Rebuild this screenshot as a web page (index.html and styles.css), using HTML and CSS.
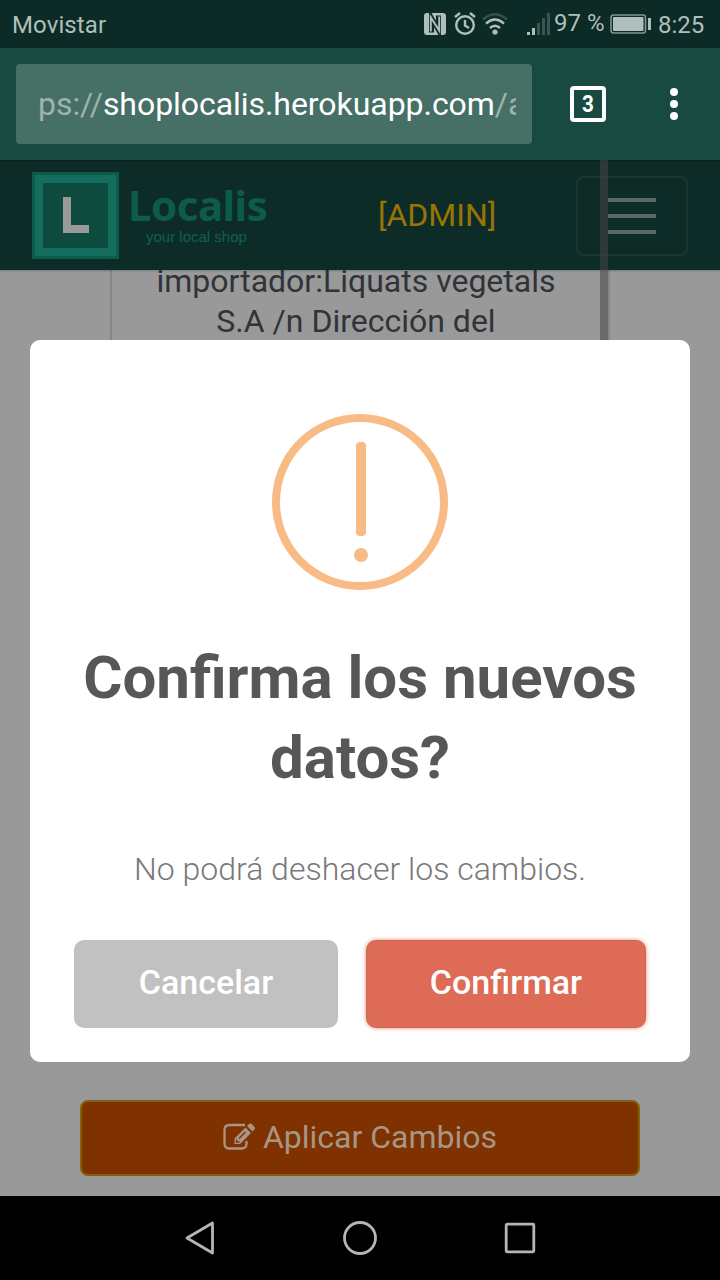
FILE: index.html
```html
<!DOCTYPE html>
<html lang="es">
<head>
<meta charset="utf-8">
<title>Localis</title>
<link rel="stylesheet" href="styles.css">
</head>
<body>
<div class="phone">
  <header class="status">
    <span class="carrier">Movistar</span>
    <div class="status-icons">
      <svg class="nfc" width="22" height="22" viewBox="0 0 22 22"><rect width="22" height="22" rx="3" fill="#afbfbb"/><path d="M7.500 19.500V5L14.500 17V2.500" fill="none" stroke="#0d2b26" stroke-width="5"/><path d="M6.800 18.500V4.500L15.200 17.500V3.500" fill="none" stroke="#afbfbb" stroke-width="2"/></svg>
      <svg class="alarm" width="22" height="24" viewBox="0 0 22 24" fill="none" stroke="#afbfbb" stroke-width="2.400"><circle cx="11" cy="13" r="8.800"/><path d="M11 8v5.500l4 2.500M1 5l5-4M21 5l-5-4"/></svg>
      <svg class="wifi" width="26" height="24" viewBox="0 0 26 24" fill="none" stroke-width="2.400"><path d="M1 7.500Q13-3 25 7.500" stroke="#37514c"/><path d="M4 11.500Q13 3.500 22 11.500M8 16Q13 11.500 18 16" stroke="#afbfbb"/><circle cx="13" cy="20" r="2.600" fill="#afbfbb"/></svg>
      <svg class="signal" width="23" height="22" viewBox="0 0 23 22"><path fill="#afbfbb" d="M0 19h3v3H0zM5 15h3v7H5z"/><path fill="#3c5450" d="M10 10h3v12h-3zM15 5h3v17h-3zM20 0h3v22h-3z"/></svg>
      <span class="percent">97 %</span>
      <svg class="battery" width="41" height="20" viewBox="0 0 41 20"><rect x="1" y="1" width="34.500" height="18" rx="2.500" fill="none" stroke="#81938f" stroke-width="1.600"/><rect x="3" y="3" width="30.500" height="14" rx="1" fill="#afbfbb"/><path d="M38 4h3v12h-3z" fill="#afbfbb"/></svg>
      <span class="clock">8:25</span>
    </div>
  </header>

  <div class="browser">
    <div class="url"><div class="url-text"><span>ps://</span>shoplocalis.herokuapp.com<span>/a</span></div></div>
    <div class="tabs"><b>3</b></div>
    <svg class="dots" width="8" height="32" viewBox="0 0 8 32" fill="#fff"><circle cx="4" cy="4" r="4"/><circle cx="4" cy="16" r="4"/><circle cx="4" cy="28" r="4"/></svg>
  </div>

  <main class="page">
    <nav class="navbar">
      <div class="brand">
        <div class="mark"><svg width="26" height="36" viewBox="0 0 26 36"><path d="M0 0h8v28h18v8H0z" fill="#9a9a9a"/></svg></div>
        <div class="brand-text"><div class="name">Localis</div><div class="tagline">your local shop</div></div>
      </div>
      <div class="admin">[ADMIN]</div>
      <div class="toggler"><i></i><i></i><i></i></div>
    </nav>
    <section class="card"><p>importador:Liquats vegetals S.A /n Dirección del</p></section>
    <button class="apply">
      <svg width="33" height="28" viewBox="0 0 33 28" fill="none"><path d="M22 2H6.500Q1.500 2 1.500 7V20.500Q1.500 25.500 6.500 25.500H18.500Q23.500 25.500 23.500 20.500V18" stroke="#a69686" stroke-width="2.300"/><path d="M11.500 21V15.500L22.500 4.500L28 10L17 21zM24 3L26 1Q27.500 0 29 1.200L31.500 3.800Q32.500 5 31.500 6.500L29.500 8.500z" fill="#a69686"/><path d="M16 15.500L22.500 9M13.500 16.500v2.500h3" stroke="#803100" stroke-width="1.300"/></svg>
      <span>Aplicar Cambios</span>
    </button>
    <div class="scrollbar"></div>
    <div class="modal">
      <svg class="warn" width="176" height="176" viewBox="0 0 176 176" fill="#f8bb86"><circle cx="88" cy="88" r="84" fill="none" stroke="#f8bb86" stroke-width="8"/><rect x="84" y="28" width="10" height="94" rx="4"/><circle cx="89" cy="141" r="7"/></svg>
      <h2>Confirma los nuevos datos?</h2>
      <p>No podrá deshacer los cambios.</p>
      <div class="actions"><button class="cancel">Cancelar</button><button class="confirm">Confirmar</button></div>
    </div>
  </main>

  <footer class="navkeys">
    <svg width="32" height="36" viewBox="0 0 32 36"><path d="M3 18L28.500 3V33Z"/></svg>
    <svg width="36" height="36" viewBox="0 0 36 36"><circle cx="18" cy="18" r="15.500"/></svg>
    <svg width="32" height="32" viewBox="0 0 32 32"><rect x="2.200" y="2.200" width="27.600" height="27.600" rx="1"/></svg>
  </footer>
</div>
</body>
</html>
```
FILE: styles.css
```css
* { box-sizing: border-box; }
body, p, h2 { margin: 0; }
body { font-family: Roboto, "Liberation Sans", sans-serif; background: #000; }
button { font-family: inherit; border: 0; padding: 0; }
svg { display: block; flex: none; }
.phone { width: 720px; height: 1280px; display: flex; flex-direction: column; overflow: hidden; }

.status { height: 48px; flex: none; background: #0d2b26; color: #afbfbb; display: flex; justify-content: space-between; padding: 0 15px 0 12px; font-size: 24px; line-height: 50px; white-space: nowrap; }
.carrier { letter-spacing: .1px; }
.status-icons { display: flex; align-items: flex-start; }
.nfc { margin: 13px 8px 0 -1px; }
.alarm { margin: 12px 6px 0 0; }
.wifi { margin: 12px 19px 0 0; }
.signal { margin: 13px 4px 0 0; }
.percent { width: 56px; line-height: 46px; }
.battery { margin: 14px 7px 0 0; }
.clock { width: 47px; }

.browser { height: 112px; flex: none; background: #184a42; display: flex; align-items: center; padding-left: 16px; }
.url { width: 516px; height: 80px; border-radius: 4px; background: #466f66; padding: 0 16px 0 22px; }
.url-text { overflow: hidden; white-space: nowrap; color: #fff; font-size: 32px; line-height: 80px; letter-spacing: -.05px; }
.url-text span { color: #9db3ad; }
.tabs { width: 36px; height: 36px; margin-left: 38px; border: 4px solid #fff; border-radius: 4px; color: #fff; font-size: 24px; line-height: 29px; text-align: center; }
.tabs b { display: inline-block; transform: scaleX(.86); }
.dots { margin-left: 64px; }

.page { position: relative; height: 1036px; flex: none; background: #999; display: flex; flex-direction: column; align-items: center; overflow: hidden; }
.navbar { position: relative; width: 720px; height: 110px; flex: none; display: flex; align-items: center; padding: 0 32px; background: #0e2c27; border-top: 1px solid #0a211d; box-shadow: 0 1px 2px rgba(0,0,0,.2); }
.brand { display: flex; width: 346px; margin-top: -1px; }
.mark { width: 87px; height: 87px; border: 3px solid #0d5b4b; background: #0c4b3e; box-shadow: inset 0 0 0 8px #146e5d; display: flex; align-items: center; justify-content: center; }
.brand-text { padding-left: 9px; color: #0d5b4b; white-space: nowrap; }
.name { font-family: "Noto Sans", sans-serif; font-weight: 700; font-size: 42px; line-height: 57px; padding-top: 4px; letter-spacing: -.5px; }
.tagline { font-family: "Liberation Sans", sans-serif; font-size: 15px; line-height: 18px; margin-top: -5px; padding-left: 18px; color: #0f6151; }
.admin { color: #997404; font-size: 32px; line-height: 40px; width: 198px; margin-top: -2px; }
.toggler { width: 112px; height: 80px; border: 2px solid #1a3732; border-radius: 8px; display: flex; flex-direction: column; align-items: center; justify-content: center; gap: 12px; }
.toggler i { width: 48px; height: 4px; background: #566b67; }
.card { width: 500px; height: 760px; flex: none; border: solid #858585; border-width: 0 2px; padding: 0 30px 0 22px; margin-top: -9px; text-align: center; color: #303337; font-size: 32px; line-height: 40px; }
.apply { width: 560px; height: 76px; margin-top: 79px; flex: none; border: 2px solid #85600a; border-radius: 8px; background: #803100; color: #a69686; display: flex; align-items: center; justify-content: center; gap: 7px; padding-bottom: 3px; font-size: 32px; }
.scrollbar { position: absolute; left: 600px; top: 0; width: 8px; height: 600px; background: rgba(68,68,68,.56); }

.modal { position: absolute; left: 30px; top: 180px; width: 660px; height: 722px; border-radius: 10px; background: #fff; display: flex; flex-direction: column; align-items: center; padding-top: 74px; text-align: center; }
.modal h2 { width: 600px; margin-top: 48px; color: #575757; font-size: 60px; line-height: 80px; font-weight: 700; }
.modal p { margin-top: 50px; color: #797979; font-weight: 300; font-size: 32px; line-height: 43px; white-space: nowrap; }
.actions { display: flex; gap: 28px; margin-top: 49px; }
.actions button { height: 88px; border-radius: 10px; color: #fff; font-size: 34px; font-weight: 500; padding-bottom: 4px; }
.cancel { width: 264px; background: #c1c1c1; }
.confirm { width: 280px; background: #dd6b55; box-shadow: 0 0 4px rgba(221,107,85,.8), inset 0 0 0 1px rgba(0,0,0,.05); }

.navkeys { height: 84px; flex: none; background: #000; display: flex; align-items: center; justify-content: space-between; padding: 0 184px; }
.navkeys svg { fill: none; stroke: #b5b5b5; stroke-width: 2.800; stroke-linejoin: round; }
```
